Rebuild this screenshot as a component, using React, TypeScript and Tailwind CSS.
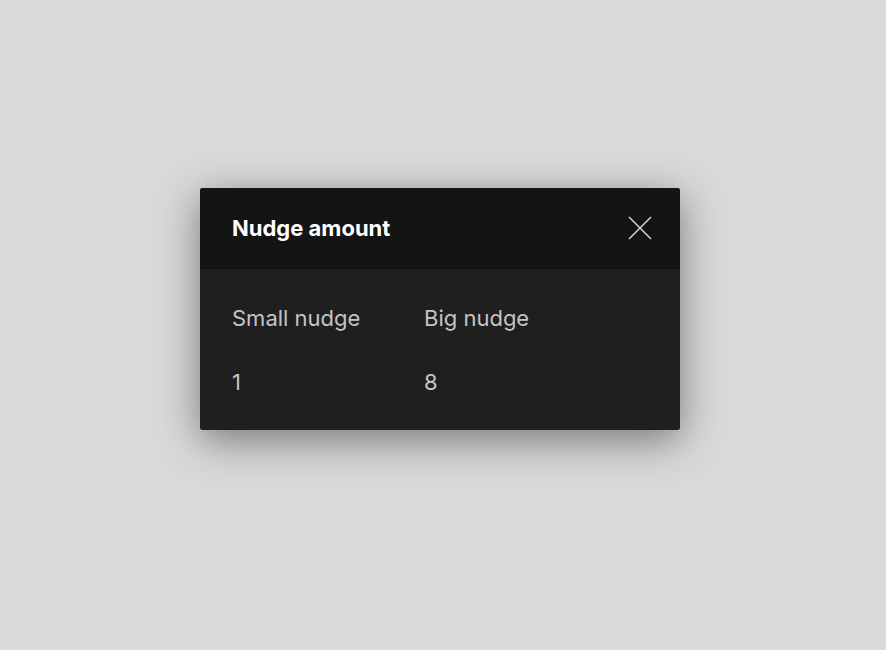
import React from "react";

export default function App() {
  return (
    <div className="w-[886px] h-[650px] bg-[#d9d9d9] relative" style={{ fontFamily: "Inter, 'Noto Sans', sans-serif" }}>
      <div className="absolute left-[200px] top-[188px] w-[480px] rounded-[2px] overflow-hidden shadow-[0_10px_40px_rgba(0,0,0,0.45)]">
        <div className="h-[81px] bg-[#141414] flex items-center justify-between pl-[32px] pr-[28px] pb-[2px]">
          <span className="text-white text-[22px] font-bold leading-none">Nudge amount</span>
          <svg width="24" height="24" viewBox="0 0 24 24" className="text-[#d4d4d4]">
            <path d="M1 1L23 23M23 1L1 23" stroke="currentColor" strokeWidth="1.5" />
          </svg>
        </div>
        <div className="h-[161px] bg-[#1f1f1f] px-[32px] pt-[38px] text-[#c4c4c4] text-[22px] leading-none">
          <div className="flex">
            <span className="w-[192px]">Small nudge</span>
            <span>Big nudge</span>
          </div>
          <div className="flex mt-[42px]">
            <span className="w-[192px]">1</span>
            <span>8</span>
          </div>
        </div>
      </div>
    </div>
  );
}
